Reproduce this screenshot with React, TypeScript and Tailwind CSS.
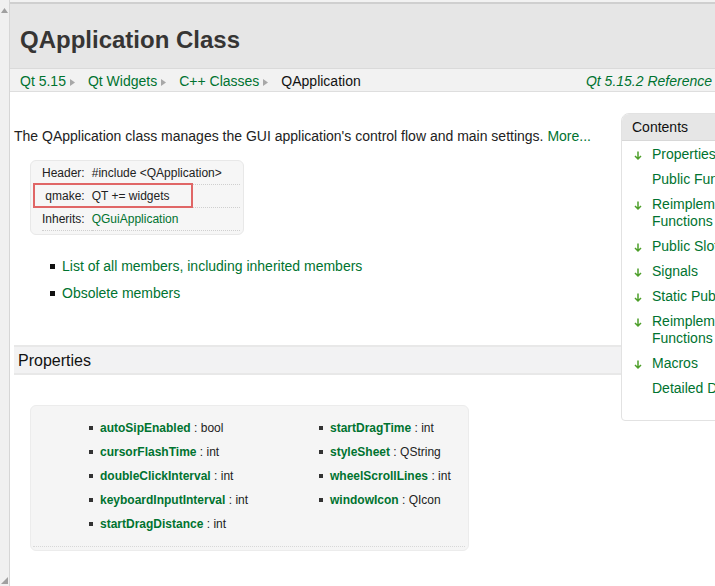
import React from "react";

const green = "text-[#007330]";

function Crumb({ label }: { label: string }) {
  return (
    <span className="flex items-center">
      <span className={green}>{label}</span>
      <svg width="9" height="9" viewBox="0 0 9 9" className="ml-[2px] mr-[11px] mt-[2px]">
        <path d="M2 1 L7 4.5 L2 8 Z" fill="#a8a8a8" />
      </svg>
    </span>
  );
}

function DownArrow() {
  return (
    <svg width="10" height="11" viewBox="0 0 10 11" className="shrink-0 mt-[4px]">
      <path d="M5 1.5 V9 M2 6 L5 9 L8 6" stroke="#4d9f2a" strokeWidth="1.5" fill="none" />
    </svg>
  );
}

const contents: { label: string; arrow: boolean }[] = [
  { label: "Properties", arrow: true },
  { label: "Public Functions", arrow: false },
  { label: "Reimplemented Public Functions", arrow: true },
  { label: "Public Slots", arrow: true },
  { label: "Signals", arrow: true },
  { label: "Static Public Members", arrow: true },
  { label: "Reimplemented Protected Functions", arrow: true },
  { label: "Macros", arrow: true },
  { label: "Detailed Description", arrow: false },
];

const props1: [string, string][] = [
  ["autoSipEnabled", "bool"],
  ["cursorFlashTime", "int"],
  ["doubleClickInterval", "int"],
  ["keyboardInputInterval", "int"],
  ["startDragDistance", "int"],
];

const props2: [string, string][] = [
  ["startDragTime", "int"],
  ["styleSheet", "QString"],
  ["wheelScrollLines", "int"],
  ["windowIcon", "QIcon"],
];

function PropList({ items }: { items: [string, string][] }) {
  return (
    <ul className="flex flex-col gap-[7px]">
      {items.map(([name, type]) => (
        <li key={name} className="flex items-center h-[17px] text-[12px]">
          <span className="w-[4px] h-[4px] bg-[#333] mr-[7px]" />
          <span className={`${green} font-bold`}>{name}</span>
          <span className="text-[#222]">&nbsp;: {type}</span>
        </li>
      ))}
    </ul>
  );
}

export default function App() {
  return (
    <div className="flex w-[715px] h-[586px] overflow-hidden bg-white text-[#222] font-['Liberation_Sans',Arial,sans-serif]">
      {/* left scroll strip */}
      <div className="w-[10px] shrink-0 bg-[#f0f0f0] border-r border-[#d6d6d6] flex flex-col justify-between">
        <svg width="9" height="9" viewBox="0 0 9 9" className="mt-[6px]">
          <path d="M1 7 L4.5 2 L8 7 Z" fill="#a0a0a0" />
        </svg>
        <svg width="9" height="9" viewBox="0 0 9 9" className="mb-[1px]">
          <path d="M8 1 L8 8 L1 8 Z" fill="#a0a0a0" />
        </svg>
      </div>

      <div className="flex-1 min-w-0 flex flex-col">
        <div className="h-[2px] bg-[#f2f2f2]" />
        <div className="h-[2px] bg-[#cfcfcf]" />
        {/* title */}
        <div className="h-[64px] bg-[#e6e6e6] flex items-center pl-[10px] pt-[8px]">
          <h1 className="text-[24px] font-bold text-[#363534] whitespace-nowrap">QApplication Class</h1>
        </div>
        {/* breadcrumb */}
        <div className="h-[24px] bg-[#f2f2f2] border-t border-[#dadada] border-b border-b-[#dedede] flex items-center pl-[10px] pr-[3px] pt-[2px] text-[14px] whitespace-nowrap">
          <Crumb label="Qt 5.15" />
          <Crumb label="Qt Widgets" />
          <Crumb label="C++ Classes" />
          <span className="text-[#111]">QApplication</span>
          <span className={`${green} italic ml-auto`}>Qt 5.15.2 Reference</span>
        </div>

        <div className="flex">
          {/* main column */}
          <div className="w-[611px] shrink-0 pl-[4px]">
            <p className="mt-[36px] text-[14px] leading-[16px] whitespace-nowrap">
              The QApplication class manages the GUI application's control flow and main settings.{" "}
              <span className={green}>More...</span>
            </p>

            <div className="relative mt-[16px] ml-[16px] w-[214px] bg-[#f6f6f6] border border-[#e8e8e8] rounded-[6px] pt-[1px] pb-[3px] pl-[11px] pr-[3px] text-[12px]">
              <div className="grid grid-cols-[auto_1fr]">
                {[
                  ["Header:", "#include <QApplication>", false],
                  ["qmake:", "QT += widgets", false],
                  ["Inherits:", "QGuiApplication", true],
                ].map(([label, value, link]) => (
                  <React.Fragment key={label as string}>
                    <div className="h-[23px] flex items-center justify-end pr-[7px] border-b border-dotted border-[#cfcfcf]">
                      {label}
                    </div>
                    <div className={`h-[23px] flex items-center border-b border-dotted border-[#cfcfcf] ${link ? green : ""}`}>
                      {value}
                    </div>
                  </React.Fragment>
                ))}
              </div>
              <div className="absolute left-[2px] top-[22px] w-[160px] h-[25px] border-2 border-[#e06666]" />
            </div>

            <ul className="mt-[23px] ml-[36px] flex flex-col gap-[10px] text-[14px]">
              {["List of all members, including inherited members", "Obsolete members"].map((t) => (
                <li key={t} className="flex items-center h-[17px]">
                  <span className="w-[5px] h-[5px] bg-[#111] mr-[7px]" />
                  <span className={green}>{t}</span>
                </li>
              ))}
            </ul>

            <div className="mt-[43px] h-[30px] bg-[#f2f2f3] border-t-2 border-[#e8e8e8] border-b-2 border-b-[#e8e8e8] flex items-center pl-[4px] pt-[1px]">
              <h2 className="text-[16px] text-[#111]">Properties</h2>
            </div>

            <div className="mt-[30px] ml-[16px] w-[439px] h-[146px] bg-[#f5f5f5] border border-[#ececec] rounded-[6px] pt-[13px] pl-[58px]">
              <div className="grid grid-cols-[230px_1fr] pb-[14px] border-b border-dotted border-[#d8d8d8] mr-[3px] -ml-[56px] pl-[56px]">
                <PropList items={props1} />
                <PropList items={props2} />
              </div>
            </div>
          </div>

          {/* contents sidebar */}
          <div className="w-[220px] shrink-0 mt-[21px] h-[308px] border border-[#e2e2e2] rounded-tl-[8px] rounded-bl-[4px] overflow-hidden">
            <div className="h-[27px] bg-[#e6e6e6] border-b border-[#d8d8d8] flex items-center pl-[10px] text-[14px] text-[#111]">
              Contents
            </div>
            <ul className="pt-[5px] flex flex-col gap-[8px] text-[14px]">
              {contents.map((c) => (
                <li key={c.label} className="flex pl-[11px]">
                  <span className="w-[19px] shrink-0 flex">{c.arrow && <DownArrow />}</span>
                  <span className={`${green} w-[170px] leading-[17px]`}>{c.label}</span>
                </li>
              ))}
            </ul>
          </div>
        </div>
      </div>
    </div>
  );
}
